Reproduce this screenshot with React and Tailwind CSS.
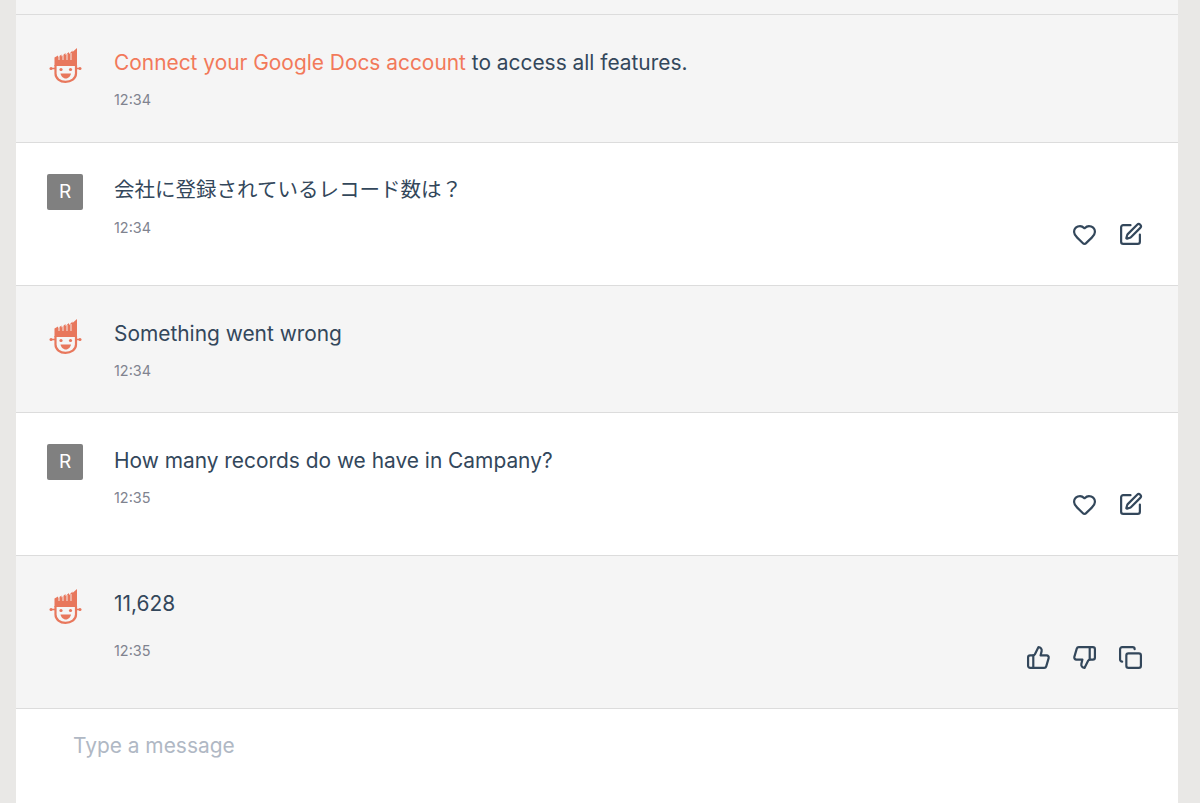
import React from 'react'
import { Heart, SquarePen, ThumbsUp, ThumbsDown, Copy } from 'lucide-react'

function BotLogo() {
  return (
    <svg width="33" height="36" viewBox="0 0 33 36" className="text-[#e8775c]" fill="none">
      {/* hair */}
      <path d="M5.5 19V10.5L9 8.5V10L12.5 7.5V9.5L16.5 6V8L20 5V7L23.5 3.5V5L28 1V19Z" fill="currentColor" />
      {/* gaps between the strands */}
      <path d="M10 9V13M14 8V13M18 7V13M22 6V13" stroke="#f5f5f5" strokeWidth="0.9" />
      {/* head */}
      <path d="M6.5 18V26.5C6.5 31.5 11 34.8 16.5 34.8C22 34.8 27 31.5 27 26.5V18" stroke="currentColor" strokeWidth="2.2" />
      {/* ears */}
      <path d="M2 21.5H6M27 21.5H31" stroke="currentColor" strokeWidth="1.3" />
      <circle cx="2" cy="21.5" r="1.5" fill="currentColor" />
      <circle cx="31" cy="21.5" r="1.5" fill="currentColor" />
      {/* eyes */}
      <circle cx="12" cy="22.5" r="1.6" fill="currentColor" />
      <circle cx="21.5" cy="22.5" r="1.6" fill="currentColor" />
      {/* smile */}
      <path d="M11.5 26.5H22C21.5 29 19.5 31.5 16.8 31.5C14 31.5 12 29 11.5 26.5Z" fill="currentColor" />
    </svg>
  )
}

function UserAvatar() {
  return (
    <div className="w-9 h-9 bg-[#808080] rounded-[2px] flex items-center justify-center text-white text-[19px]">
      R
    </div>
  )
}

function ActionIcon({ icon: Icon }) {
  return (
    <div className="w-[46px] flex justify-center text-[#33475b]">
      <Icon size={25} strokeWidth={2.1} />
    </div>
  )
}

function Row({ bot, gapClass, padClass, actions, time, children }) {
  return (
    <div className={`flex items-end border-b border-[#dcdcdc] pl-[31px] pr-[25px] pt-[30px] ${bot ? 'bg-[#f5f5f5]' : 'bg-white'} ${padClass}`}>
      <div className={`flex flex-1 min-w-0 self-start ${actions ? 'pb-[9px]' : ''}`}>
        <div className={`w-9 flex justify-center flex-shrink-0 ${bot ? 'pt-0.5' : 'pt-px'}`}>
          {bot ? <BotLogo /> : <UserAvatar />}
        </div>
        <div className="ml-[31px] min-w-0">
          <div className="text-[20.9px] leading-[36px] text-[#33475b]">{children}</div>
          <div className={`text-[14.4px] leading-5 text-[#80838f] ${gapClass}`}>{time}</div>
        </div>
      </div>
      {actions && (
        <div className="flex">
          {actions.map((icon, i) => <ActionIcon key={i} icon={icon} />)}
        </div>
      )}
    </div>
  )
}

export default function App() {
  return (
    <div className='h-[803px] overflow-hidden bg-[#e9e8e6] pl-4 pr-[22px] font-["Inter","Noto_Sans_CJK_JP",sans-serif]'>
      <div className="h-full bg-white flex flex-col">
        <div className="h-[15px] flex-shrink-0 bg-[#f5f5f5] border-b border-[#dcdcdc]" />
        <Row bot time="12:34" gapClass="mt-[9px]" padClass="pb-[32px]">
          <span className="text-[#f2795a]">Connect your Google Docs account</span> to access all features.
        </Row>
        <Row time="12:34" gapClass="mt-[9px]" padClass="pb-[38px]" actions={[Heart, SquarePen]}>
          <span className="block text-[20.5px] leading-[34px] pb-[2px]">会社に登録されているレコード数は？</span>
        </Row>
        <Row bot time="12:34" gapClass="mt-[9px]" padClass="pb-[31px]">
          Something went wrong
        </Row>
        <Row time="12:35" gapClass="mt-[9px]" padClass="pb-[38px]" actions={[Heart, SquarePen]}>
          How many records do we have in Campany?
        </Row>
        <Row bot time="12:35" gapClass="mt-[19px]" padClass="pb-[38px]" actions={[ThumbsUp, ThumbsDown, Copy]}>
          11,628
        </Row>
        <div className="pl-[57px] pt-[21px] text-[20.9px] leading-8 text-[#b0b8c4]">Type a message</div>
      </div>
    </div>
  )
}
